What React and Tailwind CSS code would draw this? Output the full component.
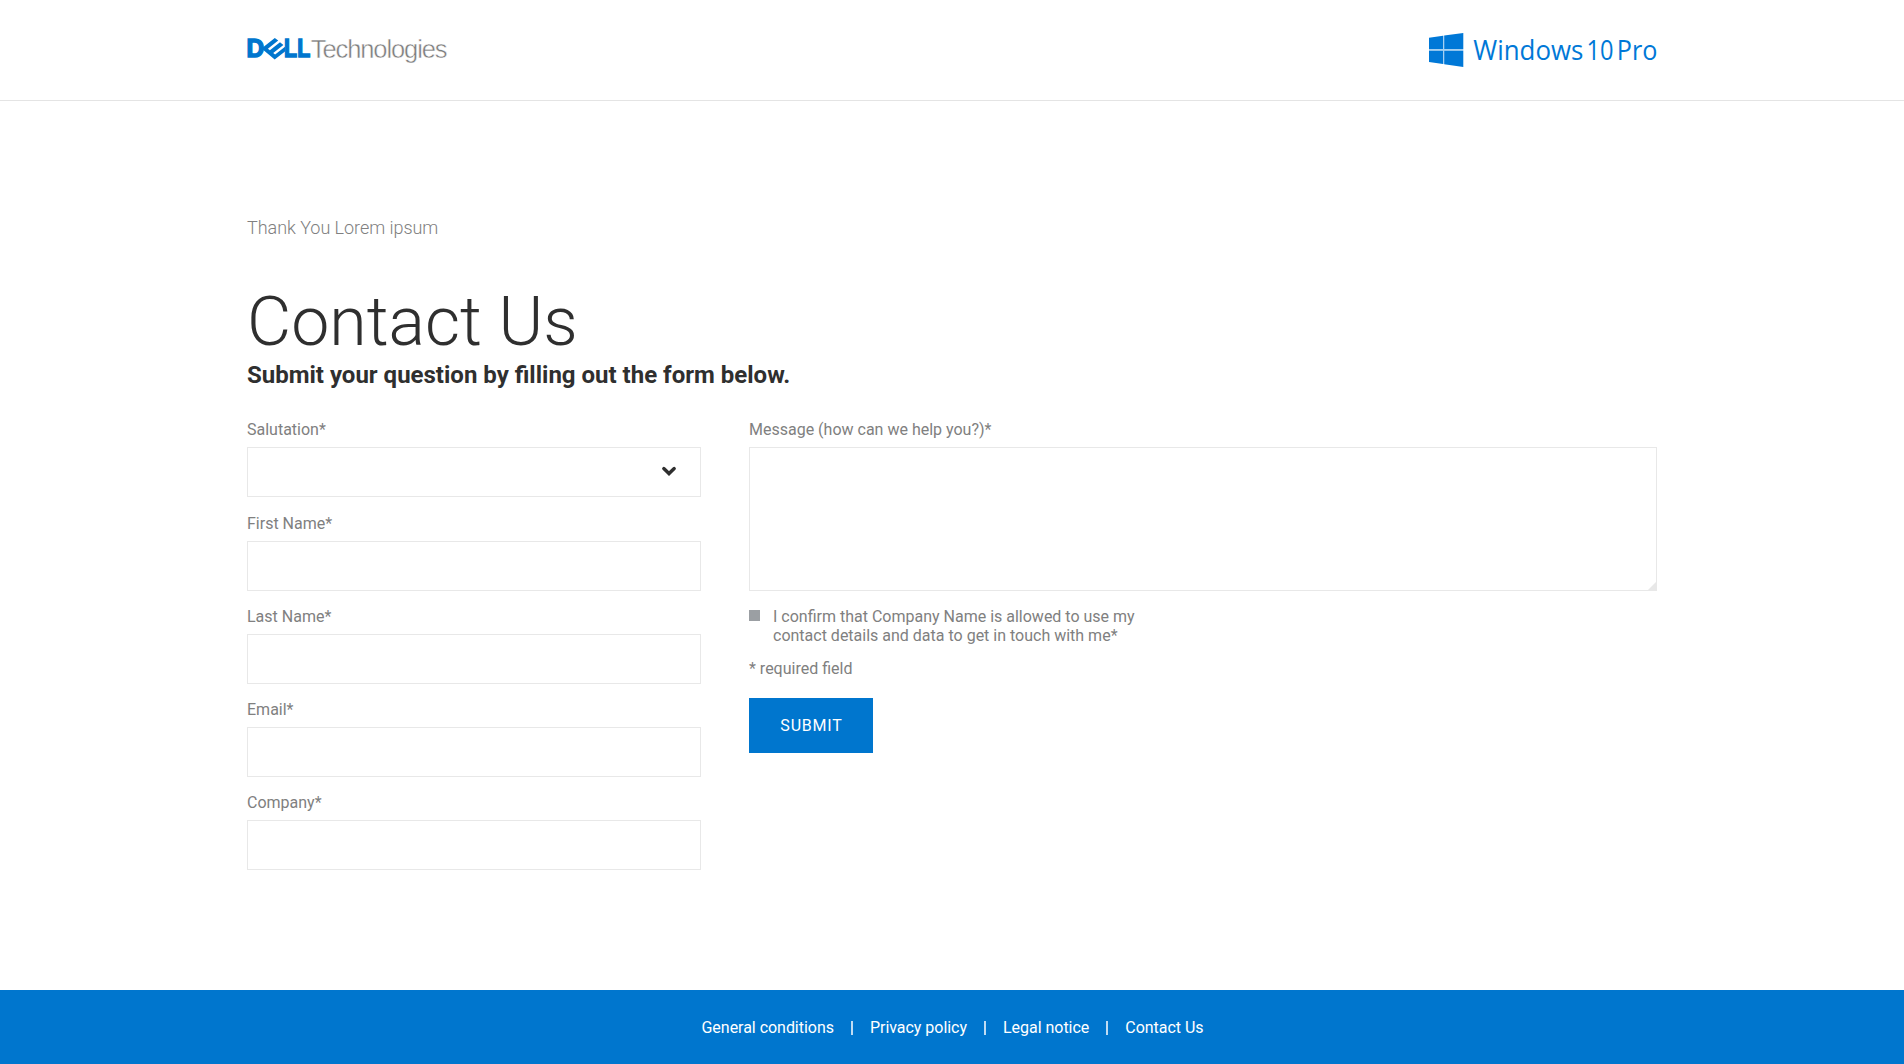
function DellLogo() {
  return (
    <svg className="mt-px -ml-1 block h-[46px] w-[212px]" viewBox="-4 -8 212 46" role="img" aria-label="Dell Technologies">
      <g fill="#0076ce" stroke="#0076ce" strokeWidth="1.5" fontFamily="Liberation Sans" fontWeight="700" fontSize="25">
        <text x="-0.6" y="24.2" textLength="17.6" lengthAdjust="spacingAndGlyphs">D</text>
        <text x="37" y="24.2" textLength="13" lengthAdjust="spacingAndGlyphs">L</text>
        <text x="50.3" y="24.2" textLength="13" lengthAdjust="spacingAndGlyphs">L</text>
      </g>
      <path
        fill="#0076ce"
        d="M14.5 15.6 27.8 5 31.2 7.6 20.9 15.7 22.9 17.3 33 9.3 36.4 11.9 26.2 19.9 28.1 21.5 38 13.7V18.6L27.7 26.4Z"
      />
      <text x="63.8" y="24.7" fill="#7c7c7c" stroke="#ffffff" strokeWidth="0.45" fontFamily="Liberation Sans" fontSize="25.5" letterSpacing="-1.1">
        Technologies
      </text>
    </svg>
  );
}

function WindowsLogo() {
  return (
    <svg className="-mr-1 block h-[52px] w-[233px]" viewBox="0 -8 233 52" role="img" aria-label="Windows 10 Pro">
      <g fill="#0078d7">
        <path d="M1 5.8 15 3.8V17H1ZM16.2 3.6 35.3 1V17H16.2ZM1 18.8H15V32L1 30ZM16.2 18.8H35.3V35L16.2 32.2Z" />
        <path opacity=".35" d="M1 17H35.3V18.8H1ZM15 3.8H16.2V32H15Z" />
        <g fontFamily="Open Sans" fontSize="28">
          <text x="45.3" y="27.6" textLength="110" lengthAdjust="spacingAndGlyphs">Windows</text>
          <text x="158.5" y="27.6" textLength="27" lengthAdjust="spacingAndGlyphs">10</text>
          <text x="188.8" y="27.6" textLength="40.6" lengthAdjust="spacingAndGlyphs">Pro</text>
        </g>
      </g>
    </svg>
  );
}

function Field({ label, children, className = "" }) {
  return (
    <label className={`block ${className}`}>
      <span className="block h-[27px] leading-[19px]">{label}</span>
      {children}
    </label>
  );
}

const inputClass = "block h-[50px] w-full border border-[#e8e8e8] bg-white px-4 outline-none";

export default function App() {
  return (
    <div className="flex h-[1064px] flex-col bg-white font-['Roboto',sans-serif] text-base text-[#808080]">
      <header className="h-[101px] border-b border-[#e4e4e4]">
        <div className="mx-auto flex w-[1410px] items-start justify-between pt-6">
          <DellLogo />
          <WindowsLogo />
        </div>
      </header>

      <main className="mx-auto w-[1410px] flex-1 pt-[116px]">
        <p className="text-[18px] leading-[22px] font-light tracking-[-0.04px]">Thank You Lorem ipsum</p>
        <h1 className="mt-[43px] text-[68px] leading-[80px] font-light text-[#2f2f2f]">Contact Us</h1>
        <h2 className="-mt-px text-[24px] leading-[28px] font-bold text-[#2f2f2f]">
          Submit your question by filling out the form below.
        </h2>

        <form className="mt-[31px] grid grid-cols-[454px_908px] gap-x-12">
          <div>
            <Field label="Salutation*" className="mb-[17px]">
              <span className="relative block">
                <select className={`${inputClass} appearance-none`} />
                <svg className="pointer-events-none absolute top-[18px] right-6 h-3 w-4" viewBox="0 0 16 12" fill="none" stroke="#2f2f2f" strokeWidth="3.4" strokeLinecap="round">
                  <path d="M2.8 3.6 8 8.6 13.2 3.6" />
                </svg>
              </span>
            </Field>
            <div className="space-y-4">
              {["First Name*", "Last Name*", "Email*", "Company*"].map((label) => (
                <Field key={label} label={label}>
                  <input type="text" className={inputClass} />
                </Field>
              ))}
            </div>
          </div>

          <div>
            <Field label="Message (how can we help you?)*">
              <span className="relative block">
                <textarea className="block h-[144px] w-full resize-none border border-[#e8e8e8] bg-white p-4 outline-none" />
                <svg className="pointer-events-none absolute right-0 bottom-0 size-[10px]" viewBox="0 0 10 10">
                  <path d="M10 0V10H0Z" fill="#e8e8e8" />
                </svg>
              </span>
            </Field>
            <label className="mt-4 flex leading-[19px]">
              <span className="mt-[3px] mr-[13px] size-[11px] shrink-0 bg-[#9b9fa3]" />
              <span>
                I confirm that Company Name is allowed to use my
                <br />
                contact details and data to get in touch with me*
              </span>
            </label>
            <p className="mt-[14px] leading-[19px]">* required field</p>
            <button type="button" className="mt-5 h-[55px] w-[124px] bg-[#0076ce] pl-px tracking-[0.8px] text-white">
              SUBMIT
            </button>
          </div>
        </form>
      </main>

      <footer className="flex h-[74px] items-center justify-center bg-[#0076ce] pt-px pl-px tracking-[-0.03px] text-white">
        {["General conditions", "Privacy policy", "Legal notice", "Contact Us"].map((item, i) => (
          <div key={item} className="flex items-center">
            {i > 0 && <span className="mt-px mr-[17px] ml-[17px] h-[14px] w-[2px] bg-white/75" />}
            <a>{item}</a>
          </div>
        ))}
      </footer>
    </div>
  );
}
